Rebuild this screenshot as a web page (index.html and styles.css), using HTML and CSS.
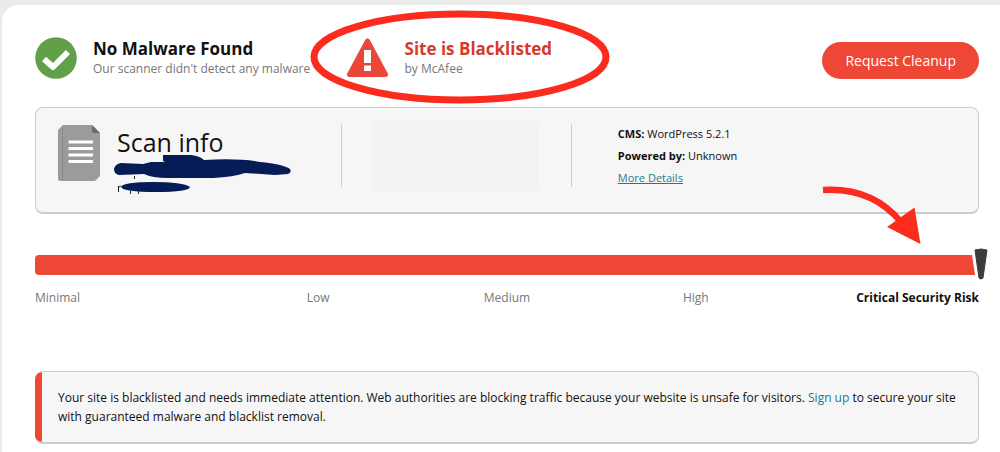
FILE: index.html
```
<!DOCTYPE html>
<html lang="en">
<head>
    <meta charset="UTF-8">
    <meta name="viewport" content="width=device-width, initial-scale=1.0">
    <title>Site scan results</title>
    <link rel="stylesheet" href="styles.css">
</head>
<body>
    <main class="panel">
        <header class="summary">
            <div class="status status-malware">
                <svg class="status-icon" viewBox="0 0 42 42" aria-hidden="true">
                    <circle cx="21" cy="21" r="20.8" fill="#629f49"/>
                    <path d="M9 22 18 30 33 15" fill="none" stroke="#fff" stroke-width="6" stroke-linejoin="round"/>
                </svg>
                <div>
                    <h2 class="status-title">No Malware Found</h2>
                    <p class="status-text">Our scanner didn't detect any malware</p>
                </div>
            </div>
            <div class="status status-blacklist">
                <svg class="status-icon" viewBox="0 0 42 42" aria-hidden="true">
                    <path d="M20.500 4 38.500 37.500H2.500Z" fill="#ea4738" stroke="#ea4738" stroke-width="5" stroke-linejoin="round"/>
                    <path d="M17 13h7v13h-7zM17 28.500h7V34h-7z" fill="#fff"/>
                </svg>
                <div>
                    <h2 class="status-title">Site is Blacklisted</h2>
                    <p class="status-text">by McAfee</p>
                </div>
                <svg class="circle-mark" viewBox="0 0 300 94" aria-hidden="true">
                    <ellipse cx="150" cy="47" rx="146" ry="43" fill="none" stroke="#fb2b1e" stroke-width="7"/>
                </svg>
            </div>
            <button type="button" class="button">Request Cleanup</button>
        </header>

        <section class="info">
            <div class="scan">
                <svg class="file-icon" viewBox="0 0 42 56" aria-hidden="true">
                    <path d="M5 0H34L42 8V51L37 56H2Q0 56 0 54V5Z" fill="#9b9b9d"/>
                    <path d="M4.500 1V55" stroke="#898989" stroke-width="1"/>
                    <path d="M34 0 42 8H36Q34 8 34 6Z" fill="#6c6c6e"/>
                    <path d="M10.500 17H35M10.500 23.500H35M10.500 30H35M10.500 36.500H35" stroke="#fff" stroke-width="3"/>
                </svg>
                <div class="scan-body">
                    <h1 class="scan-title">Scan info</h1>
                    <svg class="redaction" viewBox="0 0 180 42" aria-hidden="true">
                        <path d="M5.500 38v-6M5.500 34Q6 32 8 32M17.500 37v3M25.500 37v3M21.500 22v3" fill="none" stroke="#222" stroke-width="1"/>
                        <path d="M1 15Q2 10 8 9L30 10 38 8H52L50 7V1H78Q87 2 91 6Q126 4 147 8Q170 10 177 15Q179 18 175 20L162 21 132 19Q121 23 100 24H55Q39 24 31 20L6 21Q1 20 1 15Z" fill="#051c57"/>
                        <path d="M8 33Q10 28 40 28T77 33Q76 38 43 38T8 33Z" fill="#051c57"/>
                    </svg>
                </div>
            </div>
            <div class="preview">
                <div class="preview-box"></div>
            </div>
            <div class="details">
                <p><b>CMS:</b> WordPress 5.2.1</p>
                <p><b>Powered by:</b> Unknown</p>
                <p><a href="#" class="details-link">More Details</a></p>
            </div>
        </section>

        <section class="risk">
            <div class="risk-bar">
                <div class="risk-fill"></div>
                <svg class="risk-needle" viewBox="0 0 14 32" aria-hidden="true">
                    <path d="M1 2Q7 0 13 2L9 30Q7 32 5 30Z" fill="#3c3c3c" stroke="#3c3c3c" stroke-linejoin="round"/>
                </svg>
                <svg class="arrow" viewBox="0 0 100 62" aria-hidden="true">
                    <path d="M1 6Q50 3 79 38" fill="none" stroke="#fb2b1e" stroke-width="6.500"/>
                    <path d="M65 43 92.500 23.500 98.500 60Z" fill="#fb2b1e"/>
                </svg>
            </div>
            <ul class="risk-labels">
                <li>Minimal</li>
                <li>Low</li>
                <li>Medium</li>
                <li>High</li>
                <li class="active">Critical Security Risk</li>
            </ul>
        </section>

        <section class="alert">
            <p>Your site is blacklisted and needs immediate attention. Web authorities are blocking traffic because your website is unsafe for visitors. <a href="#">Sign up</a> to secure your site with guaranteed malware and blacklist removal.</p>
        </section>
    </main>
</body>
</html>
```
FILE: styles.css
```
* {
    box-sizing: border-box;
}
body {
    margin: 0;
    padding: 5px 0 0 2px;
    background: #ebebeb;
    color: #111;
    font-family: "Open Sans", sans-serif;
    font-size: 12px;
}
h1, h2, p, ul {
    margin: 0;
    padding: 0;
}
a {
    color: #1b7b93;
}
.panel {
    min-height: calc(100vh - 5px);
    padding: 32px 21px 8px 33px;
    background: #fff;
    border-radius: 16px 0 0 0;
}
.summary {
    display: flex;
    align-items: center;
    height: 42px;
}
.status {
    display: flex;
    align-items: center;
    gap: 16px;
    position: relative;
}
.status-malware {
    width: 33%;
}
.status-icon {
    width: 42px;
    height: 42px;
    flex: none;
}
.status-title {
    font-size: 17px;
    line-height: 22px;
    white-space: nowrap;
}
.status-text {
    color: #777;
    line-height: 18px;
    white-space: nowrap;
}
.status-blacklist .status-title {
    color: #d63a2a;
}
/* hand drawn circle around the warning */
.circle-mark {
    position: absolute;
    top: -27px;
    left: -37px;
    width: 300px;
    height: 94px;
}
.button {
    align-self: flex-end;
    height: 37px;
    margin-left: auto;
    padding: 0 23px;
    border: none;
    border-radius: 19px;
    background: #ef4736;
    color: #fff;
    font-family: inherit;
    font-size: 14px;
    cursor: pointer;
}
.info {
    display: grid;
    grid-template-columns: 306fr 231fr 407fr;
    margin-top: 28px;
    padding: 13px 0 21px;
    border: 1px solid #ccc;
    border-bottom-width: 2px;
    border-radius: 8px;
    background: #f6f6f6;
}
.scan {
    display: flex;
    gap: 17px;
    padding: 4px 0 0 22px;
}
.file-icon {
    width: 42px;
    height: 56px;
    flex: none;
}
.scan-title {
    font-size: 25px;
    font-weight: 400;
    line-height: 34px;
}
.scan-body {
    position: relative;
}
.redaction {
    position: absolute;
    top: 29px;
    left: -4px;
    width: 180px;
    height: 42px;
}
.preview {
    position: relative;
    padding: 0 34px 0 31px;
}
.preview::before,
.preview::after {
    content: "";
    position: absolute;
    top: 3px;
    bottom: 4px;
    left: 0;
    width: 1px;
    background: #ccc;
}
.preview::after {
    left: auto;
    right: 0;
}
.preview-box {
    height: 70px;
    background: #f3f3f3;
}
.details {
    padding: 2px 0 0 46px;
    font-size: 11px;
    line-height: 22px;
}
.risk {
    margin-top: 41px;
}
.risk-bar {
    position: relative;
    height: 20px;
}
.risk-fill {
    height: 100%;
    margin-right: 4px;
    border-radius: 4px 0 0 4px;
    background: #ef4736;
    clip-path: polygon(0 0, calc(100% - 3px) 0, 100% 100%, 0 100%);
}
.risk-needle {
    position: absolute;
    top: -7px;
    right: -9px;
    width: 14px;
    height: 32px;
}
.arrow {
    position: absolute;
    top: -71px;
    right: 57px;
    width: 100px;
    height: 62px;
}
.risk-labels {
    display: grid;
    grid-template-columns: repeat(5, 1fr);
    margin-top: 14px;
    color: #777;
    line-height: 18px;
    text-align: center;
    list-style: none;
}
.risk-labels li:first-child {
    text-align: left;
}
.risk-labels .active {
    color: #111;
    font-weight: bold;
    text-align: right;
}
.alert {
    position: relative;
    margin-top: 64px;
    padding: 16px 18px 16px 23px;
    overflow: hidden;
    border: 1px solid #ccc;
    border-bottom-width: 2px;
    border-left: 0;
    border-radius: 8px;
    background: #f6f6f6;
    line-height: 19px;
}
.alert::before {
    content: "";
    position: absolute;
    top: 0;
    bottom: 0;
    left: 0;
    width: 7px;
    background: #ef4736;
}
.alert a {
    text-decoration: none;
}
```
